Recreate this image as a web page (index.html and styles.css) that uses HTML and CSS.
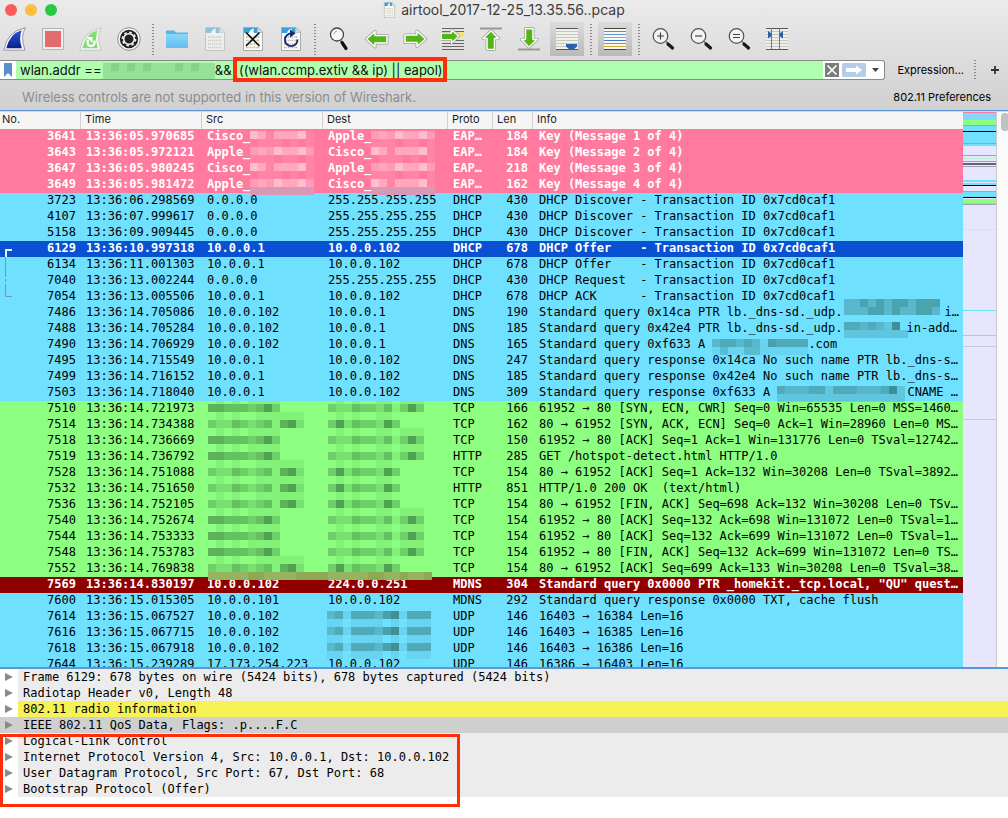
FILE: index.html
```html
<!DOCTYPE html>
<html lang="en">
<head>
<meta charset="utf-8">
<title>airtool_2017-12-25_13.35.56..pcap</title>
<link rel="stylesheet" href="styles.css">
</head>
<body>
<svg class="defs" aria-hidden="true">
  <defs>
    <linearGradient id="finblue" x1="0" y1="0" x2="0" y2="1"><stop offset="0" stop-color="#2b55d6"/><stop offset="1" stop-color="#0a1f8c"/></linearGradient>
    <linearGradient id="folder" x1="0" y1="0" x2="0" y2="1"><stop offset="0" stop-color="#8ad8fb"/><stop offset="1" stop-color="#60bdf0"/></linearGradient>
    <g id="doc">
      <path d="M2.500 .5h14.500l4.500 4.500v18.500h-19z" fill="#fbfbf3" stroke="#a9aba5"/>
      <path d="M3 1h13.500v5h-13.500z" fill="#3aa0dc"/>
      <path d="M8 6q1-4 5-4.500q-1 2 0 4.500z" fill="#fff"/>
      <path d="M17 1v4.500h4.500z" fill="#d4e6ee" stroke="#a9aba5" stroke-width=".6"/>
      <path d="M5 10h14M5 13.500h14M5 17h14M5 20.500h14" stroke="#b4b4aa" stroke-width="1.600" stroke-dasharray="1.600 .8 .6 .8"/>
    </g>
    <g id="lens">
      <circle cx="9.500" cy="9" r="7.300" fill="#f3f3f3" stroke="#4c5254" stroke-width="1.200"/>
      <path d="M14.500 14l2 2" stroke="#777" stroke-width="1.500"/>
      <path d="M17 17l4.500 4" stroke="#111c1c" stroke-width="3.200" stroke-linecap="round"/>
    </g>
    <path id="arrow" d="M1.500 12l8.500-7.500v4h12v7.500h-12v4z" stroke-linejoin="round"/>
    <g id="green-arrow"><use href="#arrow" fill="none" stroke="#999" stroke-width="3"/><use href="#arrow" fill="#55b41a" stroke="#fff" stroke-width="1.500"/></g>

    <g id="m-src-a" class="mosaic">
      <path class="a0" d="M8-1h8M24-1h8M40-1h8M48-1h24"/>
      <path class="a2" d="M40 7h8M64 7h8"/><path class="a3" d="M16 7h24M48 7h8"/><path class="a4" d="M0 7h16"/><path class="a5" d="M56 7h8"/>
    </g>
    <g id="m-src-b" class="mosaic">
      <path class="a0" d="M8-1h8M24-1h8M48-1h24M72-1h24"/>
      <path class="a0" d="M64 7h8"/><path class="a1" d="M8 7h16M40 7h8M88 7h8"/><path class="a2" d="M0 7h8M32 7h8M48 7h8"/><path class="a3" d="M24 7h8M56 7h8"/><path class="a4" d="M72 7h8"/><path class="a5" d="M80 7h8"/>
    </g>
    <g id="m-dst-a" class="mosaic">
      <path class="a0" d="M8-1h8M24-1h8M48-1h16M72-1h24"/>
      <path class="a0" d="M64 7h8"/><path class="a1" d="M8 7h16M48 7h8"/><path class="a2" d="M0 7h8M32 7h16M72 7h8M88 7h8"/><path class="a3" d="M24 7h8M56 7h8"/><path class="a5" d="M80 7h8"/>
    </g>
    <g id="m-dst-b" class="mosaic">
      <path class="a0" d="M8-1h8M24-1h8M48-1h16"/>
      <path class="a1" d="M16 7h8M48 7h8"/><path class="a2" d="M0 7h8M32 7h16M64 7h8"/><path class="a3" d="M24 7h8"/><path class="a5" d="M8 7h8M56 7h8"/>
    </g>
    <g id="m-olive"><path d="M0 11h224v8h-224z" fill="#8fa852"/><path d="M0 11h40v8h-40zM56 11h32v8h-32zM120 11h40v8h-40zM176 11h16v8h-16zM200 11h16v8h-16z" fill="#96b360"/></g>
    <g id="m-udp" class="mosaic">
      <path class="a0" d="M0 14h16M24 14h32M64 14h8M80 14h24M16 6h8M72 6h8"/>
      <path class="a2" d="M0 6h8M48 6h8"/><path class="a3" d="M8 6h8M24 6h24M80 6h24"/><path class="a4" d="M56 6h8"/><path class="a5" d="M64 6h8"/>
    </g>
    <g id="m-mac-a" class="mosaic pale">
      <path class="w1" d="M0 14h24M32 14h16M56 14h8"/>
      <path class="w2" d="M0 6h8M16 6h8M56 6h8"/><path class="w3" d="M8 6h8M32 6h16"/><path class="w4" d="M24 6h8M48 6h8"/>
    </g>
    <g id="m-mac-c" class="mosaic pale">
      <path class="w1" d="M8 14h24M40 14h8M56 14h8"/>
      <path class="w1" d="M16 6h8M56 6h8"/><path class="w3" d="M8 6h8M24 6h24"/><path class="w4" d="M0 6h8M48 6h8"/>
    </g>
    <path id="m-edge" d="M0 10h64v8h-64z" fill="#d898b8"/>
    <g id="m-q1" class="mosaic">
      <path class="a2" d="M0 3h96M0 11h96"/>
      <path class="a1" d="M16 3h8M32 3h8M48 3h16M72 3h24M24 11h16M48 11h8M72 11h16"/>
    </g>
    <g id="m-q2" class="mosaic">
      <path class="a1" d="M0 13h64M40 5h8"/><path class="a3" d="M0 5h16M24 5h8"/><path class="a2" d="M16 5h8M32 5h8"/><path class="a5" d="M48 5h8"/>
    </g>
    <g id="m-q3" class="mosaic">
      <path class="a0" d="M0 14h96M48 6h8"/><path class="a1" d="M8 14h8M32 14h16"/><path class="a2" d="M0 6h8M24 6h8M40 6h8"/><path class="a3" d="M8 6h16M32 6h8M64 6h32"/><path class="a4" d="M56 6h8"/>
    </g>
    <g id="m-q4" class="mosaic">
      <path class="a1" d="M0 13h128M48 5h8M120 5h8"/><path class="a2" d="M8 5h24M80 5h24"/><path class="a3" d="M0 5h8M32 5h16M56 5h24M104 5h8"/><path class="a5" d="M112 5h8"/>
    </g>
  </defs>
</svg>

<div class="window">
  <header class="chrome">
    <div class="titlebar">
      <div class="lights"><button class="light close" aria-label="Close"></button><button class="light minimize" aria-label="Minimize"></button><button class="light maximize" aria-label="Zoom"></button></div>
      <h1 class="title"><svg width="13" height="16" viewBox="0 0 24 24" preserveAspectRatio="none"><use href="#doc"/></svg>airtool_2017-12-25_13.35.56..pcap</h1>
    </div>

    <div class="toolbar">
      <button class="tool" aria-label="Start capture"><svg viewBox="0 0 24 24"><path d="M.8 23.200Q4 4 22.500.8Q17 9 22 23.200z" fill="#f6f6f6" stroke="#999"/><path d="M3.300 21.300Q7 6.500 18.700 3.300Q15.500 11 18.800 21.300z" fill="url(#finblue)"/></svg></button>
      <button class="tool" aria-label="Stop capture"><svg viewBox="0 0 24 24"><path d="M1.500 1.500h21v21h-21z" fill="#eee" stroke="#b5b5b5"/><path d="M4 4h16v16h-16z" fill="#e06c6c"/></svg></button>
      <button class="tool" aria-label="Restart capture"><svg viewBox="0 0 24 24"><path d="M.8 23.200Q4 4 22.500.8Q17 9 22 23.200z" fill="#f6f6f6" stroke="#c4c4c4"/><path d="M3.300 21.300Q7 6.500 18.700 3.300Q15.500 11 18.800 21.300z" fill="#7fe070"/><path d="M9 12.500q-1.500 6 2.500 6.500q5 0 4-5.500" fill="none" stroke="#fff" stroke-width="2.300"/><path d="M7.500 10h6v6z" fill="#fff"/></svg></button>
      <button class="tool" aria-label="Capture options"><svg viewBox="0 0 24 24"><circle cx="12" cy="12" r="11.300" fill="#f8f8f8" stroke="#8c8c8c"/><circle cx="12" cy="12" r="9.200" fill="#222"/><circle cx="12" cy="12" r="5.300" fill="none" stroke="#f4f4f4" stroke-width="1.600"/><circle cx="12" cy="12" r="6.600" fill="none" stroke="#f4f4f4" stroke-width="1.600" stroke-dasharray="2.600 2.580"/><circle cx="12" cy="12" r="3" fill="#222"/></svg></button>
      <span class="sep"></span>
      <button class="tool" aria-label="Open"><svg viewBox="0 0 24 24"><path d="M1 3.500h8l2 2h12v15.500h-22z" fill="#5ab5e4"/><path d="M1 7h22v14h-22z" fill="url(#folder)"/></svg></button>
      <button class="tool faded" aria-label="Save"><svg viewBox="0 0 24 24"><use href="#doc"/></svg></button>
      <button class="tool" aria-label="Close file"><svg viewBox="0 0 24 24"><use href="#doc"/><path d="M5 5.500l13.500 13.500M18.500 5.500l-13.500 13.500" stroke="#111" stroke-width="1.700"/></svg></button>
      <button class="tool" aria-label="Reload"><svg viewBox="0 0 24 24"><use href="#doc"/><path d="M12.500 6.500a6.300 6.300 0 1 0 6 6" fill="none" stroke="#142c78" stroke-width="1.900"/><path d="M11 2.500l5.500 4-5.500 4z" fill="#142c78"/></svg></button>
      <span class="sep"></span>
      <button class="tool" aria-label="Find packet"><svg viewBox="0 0 24 24"><circle cx="10" cy="7.500" r="6.500" fill="#f8f8f8" stroke="#444" stroke-width="1.300"/><path d="M7 7.500q0-3 3-3.500" fill="none" stroke="#aaa"/><path d="M13.500 13.500l1.500 1.500" stroke="#666" stroke-width="1.500"/><path d="M15 15.500l4 6" stroke="#111" stroke-width="3.200" stroke-linecap="round"/></svg></button>
      <button class="tool" aria-label="Go back"><svg viewBox="0 0 24 24"><use href="#green-arrow"/></svg></button>
      <button class="tool" aria-label="Go forward"><svg viewBox="0 0 24 24"><g transform="rotate(180 12 12)"><use href="#green-arrow"/></g></svg></button>
      <button class="tool" aria-label="Go to packet"><svg viewBox="0 0 24 24"><path d="M1 1.500h22M1 4.500h22M1 13.500h22M1 16.500h22M1 19.500h22M1 22.500h22" stroke="#666"/><path d="M16 5.500h7v4h-7z" fill="#fbe34a"/><g transform="translate(19 -1) scale(-.85 .85)"><use href="#green-arrow"/></g></svg></button>
      <button class="tool" aria-label="First packet"><svg viewBox="0 0 24 24"><path d="M1 1.500h22" stroke="#999" stroke-width="2"/><g transform="translate(24 2.500) rotate(90) scale(.9 1)"><use href="#green-arrow"/></g></svg></button>
      <button class="tool" aria-label="Last packet"><svg viewBox="0 0 24 24"><path d="M1 22.500h22" stroke="#999" stroke-width="2"/><g transform="translate(0 21.500) rotate(-90) scale(.9 1)"><use href="#green-arrow"/></g></svg></button>
      <button class="tool pressed" aria-label="Auto scroll" aria-pressed="true"><svg viewBox="0 0 24 24"><path d="M1 1h22v22h-22z" fill="#f1f1ec"/><path d="M1 1.500h22M1 22.500h22" stroke="#555"/><path d="M1 4.500h22M1 7.500h22M1 10.500h22M1 13.500h22M1 16.500h22M1 19.500h22" stroke="#c6c6bf"/><path d="M11 17h11v2.500l-4 3.500h-3l-4-3.500z" fill="#2a5fad"/></svg></button>
      <span class="sep"></span>
      <button class="tool pressed" aria-label="Colorize" aria-pressed="true"><svg viewBox="0 0 24 24"><path d="M1 1h22v22h-22z" fill="#f7f7f2"/><path d="M1 1.500h22M1 22.500h22" stroke="#444"/><path d="M1 4.500h22" stroke="#e85c5c"/><path d="M1 7.500h22" stroke="#6a90e0"/><path d="M1 10.500h22" stroke="#78cc58"/><path d="M1 13.500h22" stroke="#4a78c8"/><path d="M1 16.500h22" stroke="#9a8aa8"/><path d="M1 19.500h22" stroke="#d0aa30"/></svg></button>
      <span class="sep"></span>
      <button class="tool" aria-label="Zoom in"><svg viewBox="0 0 24 24"><use href="#lens"/><path d="M6 9h7M9.500 5.500v7" stroke="#444" stroke-width="1.200"/></svg></button>
      <button class="tool" aria-label="Zoom out"><svg viewBox="0 0 24 24"><use href="#lens"/><path d="M6 9h7" stroke="#444" stroke-width="1.200"/></svg></button>
      <button class="tool" aria-label="Normal size"><svg viewBox="0 0 24 24"><use href="#lens"/><path d="M6 7.500h7M6 10.500h7" stroke="#444" stroke-width="1.200"/></svg></button>
      <button class="tool" aria-label="Resize columns"><svg viewBox="0 0 24 24"><path d="M1 1h22v22h-22z" fill="#efefe9"/><path d="M1 4.500h22M1 7.500h22M1 10.500h22M1 13.500h22M1 16.500h22M1 19.500h22" stroke="#c6c6bf"/><path d="M1 1.500h22M1 22.500h22" stroke="#555"/><path d="M6.500 1v22M14.500 1v22" stroke="#777"/><path d="M3 4l3.500 2.500v2.500l-3.500 2.500zM18 4l-3.500 2.500v2.500l3.500 2.500z" fill="#2a5fad"/></svg></button>
    </div>

    <div class="filterbar">
      <div class="filter">
        <button class="bookmark" aria-label="Filter bookmarks"><svg width="8" height="14" viewBox="0 0 8 14"><path d="M0 0h8v14l-4-4-4 4z" fill="#5f8fca"/></svg></button>
        <input class="expr" type="text" aria-label="Display filter" value="wlan.addr ==&nbsp;&nbsp;&nbsp;&nbsp;&nbsp;&nbsp;&nbsp;&nbsp;&nbsp;&nbsp;&nbsp;&nbsp;&nbsp;&nbsp;&nbsp;&nbsp;&nbsp;&nbsp;&nbsp;&nbsp;&nbsp;&nbsp;&nbsp;&nbsp;&nbsp;&nbsp;&nbsp;&nbsp;&nbsp;&nbsp;&nbsp;&amp;&amp;&nbsp; ((wlan.ccmp.extiv &amp;&amp; ip) || eapol)">
        <svg class="addr-mask mosaic" width="112" height="16"><path class="a1" d="M0 4h8M16 4h8M32 4h8M48 4h24M80 4h8M96 4h16M0 12h112"/><path class="a2" d="M8 4h8M24 4h8M40 4h8M72 4h8M88 4h8"/></svg>
        <button class="clear" aria-label="Clear filter"><svg width="14" height="14" viewBox="0 0 14 14"><path d="M0 0h14v14h-14z" fill="#7c7c78"/><path d="M2.500 2.500l9 9M11.500 2.500l-9 9" stroke="#fff" stroke-width="1.600"/></svg></button>
        <button class="apply" aria-label="Apply filter"><svg width="24" height="14" viewBox="0 0 24 14"><rect width="24" height="14" rx="1.500" fill="#b4cdea"/><path d="M4 5h10v-2.500l6 4.500-6 4.500v-2.500h-10z" fill="#fff"/></svg></button>
        <button class="drop" aria-label="Filter history"><svg width="7" height="4" viewBox="0 0 7 4"><path d="M0 0h7l-3.500 4z" fill="#444"/></svg></button>
        <div class="mark mark-filter"></div>
      </div>
      <button class="text-button">Expression...</button>
      <span class="sep short"></span>
      <button class="add" aria-label="Add filter button"><svg width="8" height="8" viewBox="0 0 8 8"><path d="M0 4h8M4 0v8" stroke="#333" stroke-width="1.800"/></svg></button>
    </div>

    <div class="wireless">
      <span class="notice">Wireless controls are not supported in this version of Wireshark.</span>
      <button class="text-button">802.11 Preferences</button>
    </div>
  </header>

  <main>
    <section class="packets">
      <div class="list">
        <table>
          <colgroup><col class="c-no"><col class="c-time"><col class="c-src"><col class="c-dst"><col class="c-proto"><col class="c-len"><col></colgroup>
          <thead><tr><th>No.</th><th>Time</th><th>Src</th><th>Dest</th><th>Proto</th><th>Len</th><th>Info</th></tr></thead>
          <tbody>
            <tr class="eapol"><td>3641</td><td>13:36:05.970685</td><td>Cisco_<svg class="m"><use href="#m-mac-c"/></svg></td><td>Apple_<svg class="m"><use href="#m-mac-a"/></svg></td><td>EAP…</td><td>184</td><td>Key (Message 1 of 4)</td></tr>
            <tr class="eapol"><td>3643</td><td>13:36:05.972121</td><td>Apple_<svg class="m"><use href="#m-mac-a"/></svg></td><td>Cisco_<svg class="m"><use href="#m-mac-c"/></svg></td><td>EAP…</td><td>184</td><td>Key (Message 2 of 4)</td></tr>
            <tr class="eapol"><td>3647</td><td>13:36:05.980245</td><td>Cisco_<svg class="m"><use href="#m-mac-c"/></svg></td><td>Apple_<svg class="m"><use href="#m-mac-a"/></svg></td><td>EAP…</td><td>218</td><td>Key (Message 3 of 4)</td></tr>
            <tr class="eapol"><td>3649</td><td>13:36:05.981472</td><td>Apple_<svg class="m"><use href="#m-mac-a"/><use href="#m-edge"/></svg></td><td>Cisco_<svg class="m"><use href="#m-mac-c"/><use href="#m-edge"/></svg></td><td>EAP…</td><td>162</td><td>Key (Message 4 of 4)</td></tr>
            <tr class="udp"><td>3723</td><td>13:36:06.298569</td><td>0.0.0.0</td><td>255.255.255.255</td><td>DHCP</td><td>430</td><td>DHCP Discover - Transaction ID 0x7cd0caf1</td></tr>
            <tr class="udp"><td>4107</td><td>13:36:07.999617</td><td>0.0.0.0</td><td>255.255.255.255</td><td>DHCP</td><td>430</td><td>DHCP Discover - Transaction ID 0x7cd0caf1</td></tr>
            <tr class="udp"><td>5158</td><td>13:36:09.909445</td><td>0.0.0.0</td><td>255.255.255.255</td><td>DHCP</td><td>430</td><td>DHCP Discover - Transaction ID 0x7cd0caf1</td></tr>
            <tr class="selected"><td><svg class="related"><path d="M12 9h-6v7" stroke="#e8eefc" stroke-width="2"/><path d="M5.500 16v20M5.500 38v3M5.500 43v12.500h6.500" stroke="#7d97a8"/></svg>6129</td><td>13:36:10.997318</td><td>10.0.0.1</td><td>10.0.0.102</td><td>DHCP</td><td>678</td><td>DHCP Offer    - Transaction ID 0x7cd0caf1</td></tr>
            <tr class="udp"><td>6134</td><td>13:36:11.001303</td><td>10.0.0.1</td><td>10.0.0.102</td><td>DHCP</td><td>678</td><td>DHCP Offer    - Transaction ID 0x7cd0caf1</td></tr>
            <tr class="udp"><td>7040</td><td>13:36:13.002244</td><td>0.0.0.0</td><td>255.255.255.255</td><td>DHCP</td><td>430</td><td>DHCP Request  - Transaction ID 0x7cd0caf1</td></tr>
            <tr class="udp"><td>7054</td><td>13:36:13.005506</td><td>10.0.0.1</td><td>10.0.0.102</td><td>DHCP</td><td>678</td><td>DHCP ACK      - Transaction ID 0x7cd0caf1</td></tr>
            <tr class="udp"><td>7486</td><td>13:36:14.705086</td><td>10.0.0.102</td><td>10.0.0.1</td><td>DNS</td><td>190</td><td>Standard query 0x14ca PTR lb._dns-sd._udp.<svg class="m w102"><use href="#m-q1" x="2" y="-5"/></svg>i…</td></tr>
            <tr class="udp"><td>7488</td><td>13:36:14.705284</td><td>10.0.0.102</td><td>10.0.0.1</td><td>DNS</td><td>185</td><td>Standard query 0x42e4 PTR lb._dns-sd._udp.<svg class="m"><use href="#m-q2" x="2"/></svg>in-add…</td></tr>
            <tr class="udp"><td>7490</td><td>13:36:14.706929</td><td>10.0.0.102</td><td>10.0.0.1</td><td>DNS</td><td>165</td><td>Standard query 0xf633 A <svg class="m w96"><use href="#m-q3"/></svg>.com</td></tr>
            <tr class="udp"><td>7495</td><td>13:36:14.715549</td><td>10.0.0.1</td><td>10.0.0.102</td><td>DNS</td><td>247</td><td>Standard query response 0x14ca No such name PTR lb._dns-s…</td></tr>
            <tr class="udp"><td>7499</td><td>13:36:14.716152</td><td>10.0.0.1</td><td>10.0.0.102</td><td>DNS</td><td>185</td><td>Standard query response 0x42e4 No such name PTR lb._dns-s…</td></tr>
            <tr class="udp"><td>7503</td><td>13:36:14.718040</td><td>10.0.0.1</td><td>10.0.0.102</td><td>DNS</td><td>309</td><td>Standard query response 0xf633 A <svg class="m w130"><use href="#m-q4"/></svg>CNAME …</td></tr>
            <tr class="http"><td>7510</td><td>13:36:14.721973</td><td><svg class="m w96 clip"><use href="#m-src-a" x="1"/></svg></td><td><svg class="m w96 clip"><use href="#m-dst-a"/></svg></td><td>TCP</td><td>166</td><td>61952 → 80 [SYN, ECN, CWR] Seq=0 Win=65535 Len=0 MSS=1460…</td></tr>
            <tr class="http"><td>7514</td><td>13:36:14.734388</td><td><svg class="m w96"><use href="#m-src-b" x="1"/></svg></td><td><svg class="m w96"><use href="#m-dst-b"/></svg></td><td>TCP</td><td>162</td><td>80 → 61952 [SYN, ACK, ECN] Seq=0 Ack=1 Win=28960 Len=0 MS…</td></tr>
            <tr class="http"><td>7518</td><td>13:36:14.736669</td><td><svg class="m w96"><use href="#m-src-a" x="1"/></svg></td><td><svg class="m w96"><use href="#m-dst-a"/></svg></td><td>TCP</td><td>150</td><td>61952 → 80 [ACK] Seq=1 Ack=1 Win=131776 Len=0 TSval=12742…</td></tr>
            <tr class="http"><td>7519</td><td>13:36:14.736792</td><td><svg class="m w96"><use href="#m-src-a" x="1"/></svg></td><td><svg class="m w96"><use href="#m-dst-a"/></svg></td><td>HTTP</td><td>285</td><td>GET /hotspot-detect.html HTTP/1.0</td></tr>
            <tr class="http"><td>7528</td><td>13:36:14.751088</td><td><svg class="m w96"><use href="#m-src-b" x="1"/></svg></td><td><svg class="m w96"><use href="#m-dst-b"/></svg></td><td>TCP</td><td>154</td><td>80 → 61952 [ACK] Seq=1 Ack=132 Win=30208 Len=0 TSval=3892…</td></tr>
            <tr class="http"><td>7532</td><td>13:36:14.751650</td><td><svg class="m w96"><use href="#m-src-b" x="1"/></svg></td><td><svg class="m w96"><use href="#m-dst-b"/></svg></td><td>HTTP</td><td>851</td><td>HTTP/1.0 200 OK  (text/html)</td></tr>
            <tr class="http"><td>7536</td><td>13:36:14.752105</td><td><svg class="m w96"><use href="#m-src-b" x="1"/></svg></td><td><svg class="m w96"><use href="#m-dst-b"/></svg></td><td>TCP</td><td>154</td><td>80 → 61952 [FIN, ACK] Seq=698 Ack=132 Win=30208 Len=0 TSv…</td></tr>
            <tr class="http"><td>7540</td><td>13:36:14.752674</td><td><svg class="m w96"><use href="#m-src-a" x="1"/></svg></td><td><svg class="m w96"><use href="#m-dst-a"/></svg></td><td>TCP</td><td>154</td><td>61952 → 80 [ACK] Seq=132 Ack=698 Win=131072 Len=0 TSval=1…</td></tr>
            <tr class="http"><td>7544</td><td>13:36:14.753333</td><td><svg class="m w96"><use href="#m-src-a" x="1"/></svg></td><td><svg class="m w96"><use href="#m-dst-a"/></svg></td><td>TCP</td><td>154</td><td>61952 → 80 [ACK] Seq=132 Ack=699 Win=131072 Len=0 TSval=1…</td></tr>
            <tr class="http"><td>7548</td><td>13:36:14.753783</td><td><svg class="m w96"><use href="#m-src-a" x="1"/></svg></td><td><svg class="m w96"><use href="#m-dst-a"/></svg></td><td>TCP</td><td>154</td><td>61952 → 80 [FIN, ACK] Seq=132 Ack=699 Win=131072 Len=0 TS…</td></tr>
            <tr class="http"><td>7552</td><td>13:36:14.769838</td><td><svg class="m w96 over"><use href="#m-src-b" x="1"/><use href="#m-olive" x="1"/></svg></td><td><svg class="m w96"><use href="#m-dst-b"/></svg></td><td>TCP</td><td>154</td><td>80 → 61952 [ACK] Seq=699 Ack=133 Win=30208 Len=0 TSval=38…</td></tr>
            <tr class="alert"><td>7569</td><td>13:36:14.830197</td><td>10.0.0.102</td><td>224.0.0.251</td><td>MDNS</td><td>304</td><td>Standard query 0x0000 PTR _homekit._tcp.local, "QU" quest…</td></tr>
            <tr class="udp"><td>7600</td><td>13:36:15.015305</td><td>10.0.0.101</td><td>10.0.0.102</td><td>MDNS</td><td>292</td><td>Standard query response 0x0000 TXT, cache flush</td></tr>
            <tr class="udp"><td>7614</td><td>13:36:15.067527</td><td>10.0.0.102</td><td><svg class="m w102"><use href="#m-udp" x="-1"/></svg></td><td>UDP</td><td>146</td><td>16403 → 16384 Len=16</td></tr>
            <tr class="udp"><td>7616</td><td>13:36:15.067715</td><td>10.0.0.102</td><td><svg class="m w102"><use href="#m-udp" x="-1"/></svg></td><td>UDP</td><td>146</td><td>16403 → 16385 Len=16</td></tr>
            <tr class="udp"><td>7618</td><td>13:36:15.067918</td><td>10.0.0.102</td><td><svg class="m w102"><use href="#m-udp" x="-1"/></svg></td><td>UDP</td><td>146</td><td>16403 → 16386 Len=16</td></tr>
            <tr class="udp"><td>7644</td><td>13:36:15.239289</td><td>17.173.254.223</td><td>10.0.0.102</td><td>UDP</td><td>146</td><td>16386 → 16403 Len=16</td></tr>
          </tbody>
        </table>
      </div>
      <svg class="minimap" aria-hidden="true">
        <path fill="#70e0ff" d="M0 1h33v7h-33zM0 14h33v5h-33zM0 20h33v11h-33zM0 32h33v2h-33zM0 68h33v2h-33zM0 71h33v2h-33zM0 80h33v5h-33zM0 91h33v1h-33zM0 198h33v1h-33zM0 223h33v1h-33z"/>
        <path fill="#ff7a9e" d="M0 0h33v1h-33z"/>
        <path fill="#8cff80" d="M0 8h33v5h-33zM0 87h33v4h-33z"/>
        <path fill="#000" d="M0 19h33v1h-33zM0 73h33v1h-33zM0 85h33v1h-33z"/>
        <path fill="#666" d="M0 51h33v2h-33z"/>
        <path fill="#a59fb5" d="M0 13h33v1h-33zM0 31h33v1h-33zM0 43h33v1h-33zM0 49h33v1h-33zM0 54h33v1h-33zM0 79h33v1h-33zM0 92h33v1h-33z"/>
        <path fill="#a8c4f4" d="M0 3h33v2h-33z"/>
        <path fill="#c0f0d8" d="M0 46h33v1h-33zM0 117h33v1h-33z"/>
        <path fill="#c9c5de" d="M0 234h33v1h-33zM0 307h33v1h-33z"/>
      </svg>
      <div class="scrollbar"><div class="thumb"></div></div>
    </section>

    <section class="details">
      <ul class="tree">
        <li><button class="twisty" aria-label="Expand"></button><span>Frame 6129: 678 bytes on wire (5424 bits), 678 bytes captured (5424 bits)</span></li>
        <li><button class="twisty" aria-label="Expand"></button><span>Radiotap Header v0, Length 48</span></li>
        <li class="warn"><button class="twisty" aria-label="Expand"></button><span>802.11 radio information</span></li>
        <li class="current"><button class="twisty" aria-label="Expand"></button><span>IEEE 802.11 QoS Data, Flags: .p....F.C</span></li>
        <li><button class="twisty" aria-label="Expand"></button><span>Logical-Link Control</span></li>
        <li><button class="twisty" aria-label="Expand"></button><span>Internet Protocol Version 4, Src: 10.0.0.1, Dst: 10.0.0.102</span></li>
        <li><button class="twisty" aria-label="Expand"></button><span>User Datagram Protocol, Src Port: 67, Dst Port: 68</span></li>
        <li><button class="twisty" aria-label="Expand"></button><span>Bootstrap Protocol (Offer)</span></li>
      </ul>
      <div class="mark mark-details"></div>
    </section>
  </main>
</div>
</body>
</html>
```
FILE: styles.css
```css
* { box-sizing: border-box; }
html, body { height: 100%; }
body { margin: 0; background: #fff; color: #000; font: 13px/16px Inter, "Liberation Sans", sans-serif; overflow: hidden; }
button { margin: 0; padding: 0; border: 0; background: none; color: inherit; font: inherit; }
svg { display: block; flex: none; }
.defs { position: absolute; width: 0; height: 0; }

.window { display: flex; flex-direction: column; height: 100%; }
.chrome { display: flex; flex-direction: column; background: linear-gradient(#ebebeb, #d0d0d0); border-bottom: 1px solid #5a97d6; }

.titlebar { position: relative; display: flex; justify-content: center; align-items: center; height: 20px; }
.lights { position: absolute; left: 5px; top: 4px; display: flex; gap: 8px; }
.light { width: 12px; height: 12px; border-radius: 50%; }
.close { background: #fc5b57; }
.minimize { background: #fdbd40; }
.maximize { background: #28c840; }
.title { display: flex; align-items: center; gap: 5px; margin: 0; font-size: 14px; font-weight: 400; color: #3c3c3c; }

.toolbar { display: flex; align-items: center; gap: 8px; height: 38px; }
.tool { display: grid; place-items: center; width: 30px; height: 34px; }
.tool svg { width: 24px; height: 24px; }
.faded { opacity: .5; }
.pressed { width: 34px; margin: 0 -2px; background: linear-gradient(#dcdcdc, #b9b9b9); }
.sep { width: 2px; height: 32px; background: radial-gradient(circle, #888 40%, transparent 60%) 0 0 / 2px 3px; flex: none; }

.filterbar { display: flex; align-items: center; height: 22px; margin-top: 1px; padding-right: 9px; }
.filter { position: relative; display: flex; align-items: center; flex: 1; height: 20px; border: 1px solid #8a8a8a; border-left: 0; border-radius: 0 3px 3px 0; background: #fff; }
.bookmark { display: grid; place-items: center; width: 16px; height: 18px; }
.expr { flex: 1; min-width: 0; height: 18px; margin: 0; padding: 0 4px; border: 0; border-radius: 0; outline: 0; background: #afffaf; color: #111; font: inherit; }
.addr-mask { position: absolute; left: 103px; top: 2px; }
.clear { margin-left: 2px; }
.apply { margin-left: 3px; }
.drop { display: grid; place-items: center; width: 18px; height: 18px; }
.text-button { font-size: 11px; white-space: nowrap; }
.filterbar .text-button { margin: 0 10px 0 12px; }
.short { height: 22px; }
.add { margin-left: 15px; }

.wireless { display: flex; align-items: center; justify-content: space-between; height: 29px; padding: 3px 17px 0 22px; }
.notice { color: #8c8c8c; }

main { display: flex; flex-direction: column; flex: 1; min-height: 0; }
.packets { display: grid; grid-template-columns: minmax(0, 1fr) 33px 12px; flex: 1; min-height: 0; overflow: hidden; border-top: 1px solid #c4dcf2; border-bottom: 2px solid #5a97d6; }
.list { min-height: 0; overflow: hidden; }
table { width: 100%; table-layout: fixed; border-collapse: separate; border-spacing: 0; }
.c-no { width: 81px; }
.c-time, .c-src { width: 121px; }
.c-dst { width: 125px; }
.c-proto { width: 45px; }
.c-len { width: 40px; }
thead th { height: 17px; padding: 0 4px 3px; border-right: 1px solid #d0d0d0; background: #f5f5f5; font-size: 11px; line-height: 14px; font-weight: 400; text-align: left; color: #1c1c1c; }
thead th:first-child { padding-left: 2px; }
thead th:last-child { border-right: 0; }
tbody { font: 12px/14px "DejaVu Sans Mono", monospace; }
td { height: 16px; padding: 0 0 2px 5px; vertical-align: top; white-space: pre; }
td:nth-child(1), td:nth-child(6) { padding: 0 5px 2px 0; text-align: right; }
td:nth-child(7) { padding-left: 6px; }
.eapol { background: #ff7a9e; color: #fff; font-weight: 700; }
.udp { background: #70e0ff; }
.http { background: #8cff80; }
.selected { background: #0a50d2; color: #fff; font-weight: 700; }
.alert { background: #900000; color: #fff; font-weight: 700; }

.m { display: inline-block; vertical-align: top; width: 64px; height: 14px; overflow: visible; }
.w96 { width: 96px; }
.w102 { width: 102px; }
.w130 { width: 130px; }
.clip { overflow: hidden; }
.over { position: relative; }
.related { float: left; width: 12px; height: 14px; overflow: visible; fill: none; }
.mosaic path { fill: none; stroke: #002810; stroke-width: 8; }
.mosaic.pale path { stroke: #fff; }
.mosaic .a0 { stroke-opacity: .06; }
.mosaic .a1 { stroke-opacity: .14; }
.mosaic .a2 { stroke-opacity: .22; }
.mosaic .a3 { stroke-opacity: .29; }
.mosaic .a4 { stroke-opacity: .35; }
.mosaic .a5 { stroke-opacity: .44; }
.mosaic .w1 { stroke-opacity: .08; }
.mosaic .w2 { stroke-opacity: .25; }
.mosaic .w3 { stroke-opacity: .34; }
.mosaic .w4 { stroke-opacity: .5; }
.udp .mosaic path { stroke: #00283c; }

.minimap { width: 33px; height: 100%; background: #e6e6ff; }
.scrollbar { padding: 1px 0 0 4px; background: #fafafa; border-left: 1px solid #c8c8c8; overflow: hidden; }
.thumb { width: 8px; height: 18px; border-radius: 4px; background: #c1c1c1; }

.details { position: relative; height: 149px; }
.tree { margin: 0; padding: 0; list-style: none; font: 12px/16px "DejaVu Sans Mono", monospace; }
.tree li { display: flex; height: 16px; }
.tree span { flex: 1; padding-left: 5px; background: #ececec; white-space: pre; }
.twisty { display: grid; place-items: center; width: 18px; height: 16px; }
.twisty::before { content: ""; border: solid transparent; border-width: 4px 0 4px 8px; border-left-color: #8a8a8a; }
.tree .warn span { background: #f6f154; }
.tree .current, .tree .current span { background: #cfcfcf; }

.mark { position: absolute; border: 4px solid #ff2d0a; pointer-events: none; }
.mark-filter { left: 233px; top: -4px; width: 214px; height: 25px; }
.mark-details { left: 0; top: 65px; width: 460px; height: 73px; border-width: 3px; }
```
